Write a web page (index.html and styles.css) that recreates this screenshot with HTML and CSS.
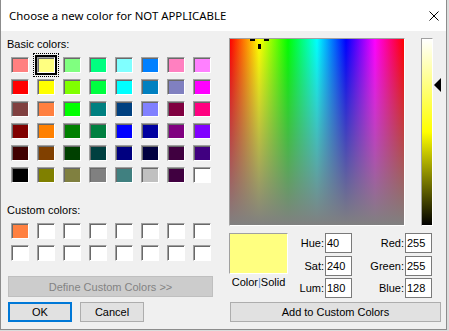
FILE: index.html
```html
<!DOCTYPE html>
<html lang="en">

<head>
    <meta charset="UTF-8">
    <title>Color</title>
    <link rel="stylesheet" href="styles.css">
</head>

<body>
    <div class="window">
        <div class="titlebar">
            <span class="title">Choose a new color for NOT APPLICABLE</span>
            <svg class="close" width="10" height="10" viewBox="0 0 10 10">
                <path d="M0.5 0.5 L9.5 9.5 M9.5 0.5 L0.5 9.5" stroke="#000" stroke-width="1" fill="none" />
            </svg>
        </div>
        <div class="dialog">
            <div class="left">
                <div class="label">Basic colors:</div>
                <div class="swatches" id="basicColors"></div>
                <div class="label custom-label">Custom colors:</div>
                <div class="swatches" id="customColors"></div>
                <button class="btn define" disabled>Define Custom Colors &gt;&gt;</button>
                <div class="button-row">
                    <button class="btn default">OK</button>
                    <button class="btn">Cancel</button>
                </div>
            </div>
            <div class="right">
                <div class="picker-row">
                    <div class="spectrum">
                        <div class="cross cross-left"></div>
                        <div class="cross cross-right"></div>
                        <div class="cross cross-bottom"></div>
                    </div>
                    <div class="lum-bar"></div>
                    <div class="lum-arrow"></div>
                </div>
                <div class="values">
                    <div class="preview-col">
                        <div class="preview"></div>
                        <div class="caption">Color<span class="sep">|</span>Solid</div>
                    </div>
                    <label class="field-label">Hue:</label>
                    <input class="field" value="40">
                    <label class="field-label">Red:</label>
                    <input class="field" value="255">
                    <label class="field-label">Sat:</label>
                    <input class="field" value="240">
                    <label class="field-label">Green:</label>
                    <input class="field" value="255">
                    <label class="field-label">Lum:</label>
                    <input class="field" value="180">
                    <label class="field-label">Blue:</label>
                    <input class="field" value="128">
                </div>
                <button class="btn add">Add to Custom Colors</button>
            </div>
        </div>
    </div>

    <script>
        const basic = [
            '#ff8080', '#ffff80', '#80ff80', '#00ff80', '#80ffff', '#0080ff', '#ff80c0', '#ff80ff',
            '#ff0000', '#ffff00', '#80ff00', '#00ff40', '#00ffff', '#0080c0', '#8080c0', '#ff00ff',
            '#804040', '#ff8040', '#00ff00', '#008080', '#004080', '#8080ff', '#800040', '#ff0080',
            '#800000', '#ff8000', '#008000', '#008040', '#0000ff', '#0000a0', '#800080', '#8000ff',
            '#400000', '#804000', '#004000', '#004040', '#000080', '#000040', '#400040', '#400080',
            '#000000', '#808000', '#808040', '#808080', '#408080', '#c0c0c0', '#400040', '#ffffff'
        ];
        const custom = ['#ff8040'];

        function fillSwatches(id, colors, count, selected) {
            const grid = document.getElementById(id);
            for (let i = 0; i < count; i++) {
                const cell = document.createElement('div');
                cell.className = 'swatch' + (i === selected ? ' selected' : '');
                cell.style.background = colors[i] || '#ffffff';
                grid.appendChild(cell);
            }
        }

        fillSwatches('basicColors', basic, 48, 1);
        fillSwatches('customColors', custom, 16, -1);
    </script>
</body>

</html>
```

FILE: styles.css
```css
body {
    margin: 0;
    background: #dcdcdc;
    font-family: "Liberation Sans", Arial, sans-serif;
    font-size: 11px;
    color: #000;
}

.window {
    width: 447px;
    height: 330px;
    box-sizing: border-box;
    background: #f0f0f0;
    border: 1px solid #8c8c8c;
    border-top: none;
}

.titlebar {
    height: 31px;
    background: #fff;
    display: flex;
    align-items: center;
    justify-content: space-between;
    padding: 0 7px 0 8px;
}

.title {
    font-family: "Noto Sans", sans-serif;
    font-size: 11.4px;
}

.dialog {
    display: flex;
    padding-top: 7px;
}

.left {
    width: 228px;
    box-sizing: border-box;
    padding-left: 6px;
    display: flex;
    flex-direction: column;
    align-items: flex-start;
}

.label {
    line-height: 13px;
}

.custom-label {
    margin-top: 21px;
}

.swatches {
    display: grid;
    grid-template-columns: repeat(8, 18px);
    grid-auto-rows: 16px;
    column-gap: 8px;
    row-gap: 6px;
    margin: 6px 0 0 4px;
}

.swatch {
    box-sizing: border-box;
    border: 1px solid;
    border-color: #a0a0a0 #fff #fff #a0a0a0;
    box-shadow: inset 1px 1px #696969;
}

.swatch.selected {
    box-shadow: inset 1px 1px #696969, 0 0 0 2px #000;
    outline: 1px dotted #000;
    outline-offset: 3px;
}

.btn {
    font-family: "Liberation Sans", Arial, sans-serif;
    font-size: 11px;
    color: #000;
    background: #e1e1e1;
    border: 1px solid #adadad;
    height: 20px;
    padding: 0;
    margin: 0;
}

.define {
    width: 205px;
    height: 21px;
    margin: 15px 0 0 1px;
    background: #cccccc;
    border-color: #bfbfbf;
    color: #838383;
}

.button-row {
    display: flex;
    gap: 8px;
    margin: 5px 0 0 1px;
}

.button-row .btn {
    width: 64px;
}

.btn.default {
    border: 2px solid #0078d7;
}

.right {
    display: flex;
    flex-direction: column;
    align-items: flex-start;
}

.picker-row {
    display: flex;
    align-items: flex-start;
    height: 188px;
}

.spectrum {
    position: relative;
    width: 176px;
    height: 188px;
    box-sizing: border-box;
    border: 1px solid;
    border-color: #a0a0a0 #fff #fff #a0a0a0;
    background:
        linear-gradient(to bottom, rgba(128, 128, 128, 0), #808080),
        linear-gradient(to right, #f00, #ff0, #0f0, #0ff, #00f, #f0f, #f00);
}

.cross {
    position: absolute;
    background: #000;
}

.cross-left {
    left: 20px;
    top: 0;
    width: 5px;
    height: 2px;
}

.cross-right {
    left: 34px;
    top: 0;
    width: 5px;
    height: 2px;
}

.cross-bottom {
    left: 28px;
    top: 5px;
    width: 3px;
    height: 5px;
}

.lum-bar {
    width: 12px;
    height: 188px;
    margin-left: 16px;
    box-sizing: border-box;
    border: 1px solid;
    border-color: #a0a0a0 #fff #fff #a0a0a0;
    background: linear-gradient(to bottom, #fff, #ff0 50%, #000);
}

.lum-arrow {
    width: 0;
    height: 0;
    margin: 40px 0 0 1px;
    border-top: 7px solid transparent;
    border-bottom: 7px solid transparent;
    border-right: 7px solid #000;
}

.values {
    display: grid;
    grid-template-columns: 59px 37px 27px 53px 27px;
    grid-template-rows: 23px 22px 20px;
    margin-top: 7px;
}

.preview-col {
    grid-row: 1 / 4;
    display: flex;
    flex-direction: column;
    align-items: center;
}

.preview {
    width: 59px;
    height: 41px;
    box-sizing: border-box;
    border: 1px solid;
    border-color: #a0a0a0 #fff #fff #a0a0a0;
    background: #ffff80;
}

.caption {
    margin-top: 2px;
    line-height: 13px;
}

.sep {
    color: #5b8fd6;
}

.field-label {
    text-align: right;
    padding-right: 1px;
    line-height: 20px;
    height: 20px;
}

.field {
    width: 27px;
    height: 20px;
    box-sizing: border-box;
    border: 1px solid #7a7a7a;
    padding: 0 1px;
    margin: 0;
    font-family: "Liberation Sans", Arial, sans-serif;
    font-size: 11px;
    color: #000;
    background: #fff;
}

.add {
    width: 211px;
    margin: 4px 0 0 1px;
}
```
